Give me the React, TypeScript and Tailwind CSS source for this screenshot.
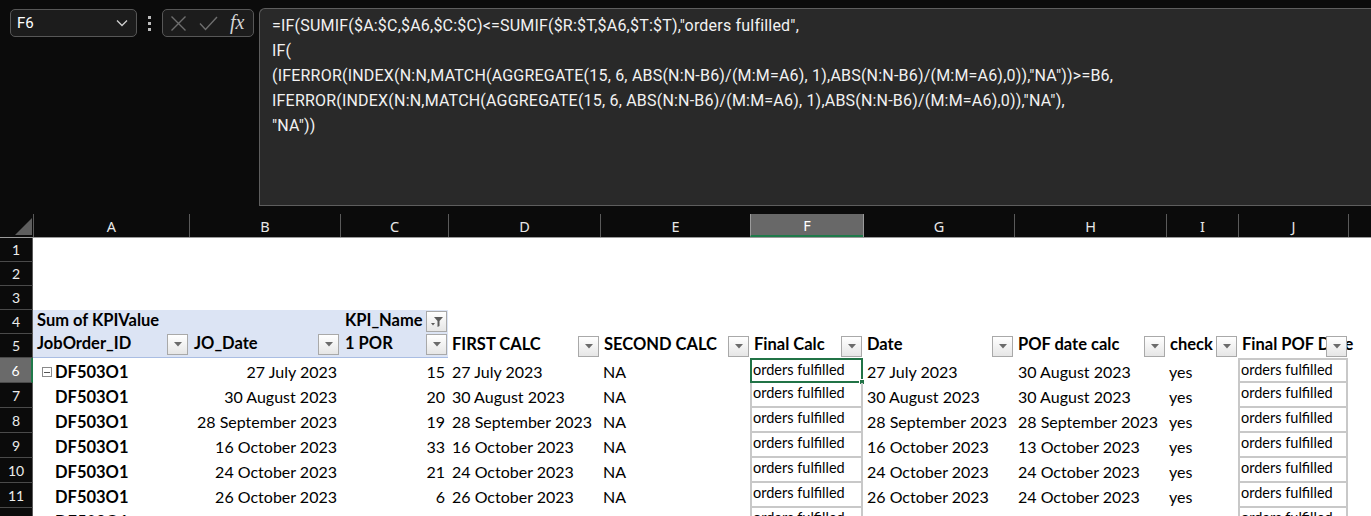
import React from "react";

const COLS = [
  { key: "A", w: "w-[156px]" },
  { key: "B", w: "w-[151px]" },
  { key: "C", w: "w-[108px]" },
  { key: "D", w: "w-[152px]" },
  { key: "E", w: "w-[150px]" },
  { key: "F", w: "w-[113px]" },
  { key: "G", w: "w-[151px]" },
  { key: "H", w: "w-[152px]" },
  { key: "I", w: "w-[72px]" },
  { key: "J", w: "w-[110px]" },
  { key: "K", w: "w-[60px]" },
];

const FORMULA = [
  '=IF(SUMIF($A:$C,$A6,$C:$C)<=SUMIF($R:$T,$A6,$T:$T),"orders fulfilled",',
  "IF(",
  '(IFERROR(INDEX(N:N,MATCH(AGGREGATE(15, 6, ABS(N:N-B6)/(M:M=A6), 1),ABS(N:N-B6)/(M:M=A6),0)),"NA"))>=B6,',
  'IFERROR(INDEX(N:N,MATCH(AGGREGATE(15, 6, ABS(N:N-B6)/(M:M=A6), 1),ABS(N:N-B6)/(M:M=A6),0)),"NA"),',
  '"NA"))',
];

const DATA = [
  { jo: "27 July 2023", por: 15, first: "27 July 2023", date: "27 July 2023", pof: "30 August 2023" },
  { jo: "30 August 2023", por: 20, first: "30 August 2023", date: "30 August 2023", pof: "30 August 2023" },
  { jo: "28 September 2023", por: 19, first: "28 September 2023", date: "28 September 2023", pof: "28 September 2023" },
  { jo: "16 October 2023", por: 33, first: "16 October 2023", date: "16 October 2023", pof: "13 October 2023" },
  { jo: "24 October 2023", por: 21, first: "24 October 2023", date: "24 October 2023", pof: "24 October 2023" },
  { jo: "26 October 2023", por: 6, first: "26 October 2023", date: "26 October 2023", pof: "24 October 2023" },
  { jo: "31 October 2023", por: 12, first: "31 October 2023", date: "31 October 2023", pof: "31 October 2023" },
];

const cellFont = { fontFamily: "Lato, 'Open Sans', sans-serif" };

function DropBtn({ filter }: { filter?: boolean }) {
  return (
    <div className="absolute right-[1px] bottom-[1px] w-[21px] h-[21px] border border-[#a9a9a9] bg-gradient-to-b from-white to-[#e6e6e6] flex items-center justify-center">
      {filter ? (
        <svg width="14" height="12" viewBox="0 0 14 12">
          <path d="M4 1h9L9.5 5v5L7.5 11V5z" fill="#5b5b5b" />
          <path d="M1 7h4L3 9.5z" fill="#5b5b5b" />
        </svg>
      ) : (
        <svg width="8" height="5" viewBox="0 0 8 5">
          <path d="M0 0h8L4 4.5z" fill="#6b6b6b" />
        </svg>
      )}
    </div>
  );
}

function RowHead({ n, h, active }: { n: number; h: string; active?: boolean }) {
  return (
    <div
      className={`w-[33px] shrink-0 ${h} flex items-center justify-center border-b border-[#4a4a4a] text-[14px] ${
        active ? "bg-[#6a6a6a] border-r-2 border-r-[#1f7a4a] text-white" : "bg-[#0b0b0b] border-r border-r-[#5a5a5a] text-[#ececec]"
      }`}
    >
      {n}
    </div>
  );
}

function BoxCell({ w, first, selected }: { w: string; first?: boolean; selected?: boolean }) {
  return (
    <div
      className={`${w} shrink-0 relative border-x-2 border-b-2 border-[#c8c8c8] ${first ? "border-t-2" : ""} pl-[1px] text-[14.5px] leading-[19px] text-black`}
    >
      orders fulfilled
      {selected && (
        <>
          <div className="absolute -left-[2px] -top-[2px] -right-[2px] -bottom-[2px] border-2 border-[#217346]" />
          <div className="absolute -right-[4px] -bottom-[4px] w-[6px] h-[6px] bg-[#217346] border border-white" />
        </>
      )}
    </div>
  );
}

export default function App() {
  return (
    <div className="w-[1371px] h-[516px] overflow-hidden bg-[#0b0b0b]" style={{ fontFamily: "'Noto Sans', sans-serif" }}>
      {/* formula bar */}
      <div className="flex items-start pt-[8px] h-[206px]">
        <div className="ml-[10px] mt-[1px] w-[127px] h-[28px] rounded-[5px] border border-[#575757] bg-[#1c1c1c] flex items-center justify-between pl-[6px] pr-[8px]">
          <span className="text-white text-[15px]" style={{ fontFamily: "Roboto, sans-serif" }}>F6</span>
          <svg width="12" height="8" viewBox="0 0 12 8">
            <path d="M1 1.5l5 5 5-5" stroke="#cfcfcf" strokeWidth="1.3" fill="none" />
          </svg>
        </div>
        <div className="w-[25px] h-[30px] flex flex-col items-center justify-center gap-[3px]">
          <div className="w-[3px] h-[3px] bg-[#bdbdbd]" />
          <div className="w-[3px] h-[3px] bg-[#bdbdbd]" />
          <div className="w-[3px] h-[3px] bg-[#bdbdbd]" />
        </div>
        <div className="mt-[1px] w-[92px] h-[28px] rounded-[5px] border border-[#575757] bg-[#1c1c1c] flex items-center pl-[7px] gap-[12px]">
          <svg width="17" height="17" viewBox="0 0 17 17">
            <path d="M1.5 1.5l14 14M15.5 1.5l-14 14" stroke="#6e6e6e" strokeWidth="1.4" />
          </svg>
          <svg width="19" height="15" viewBox="0 0 19 15">
            <path d="M1 7.5l5.5 6L18 1" stroke="#6e6e6e" strokeWidth="1.4" fill="none" />
          </svg>
          <span className="text-[#d4d4d4] text-[20px] italic leading-none -mt-[3px]" style={{ fontFamily: "'Liberation Serif', serif" }}>
            fx
          </span>
        </div>
        <div className="ml-[5px] flex-1 h-[198px] rounded-tl-[6px] border-t border-l border-b border-[#5e5e5e] bg-[#292929] pl-[12px] pt-[4px]">
          {FORMULA.map((l, i) => (
            <div key={i} className="h-[25px] leading-[25px] text-[16px] text-[#f2f2f2] whitespace-pre tracking-[0.2px]" style={{ fontFamily: "Roboto, sans-serif" }}>
              {l}
            </div>
          ))}
        </div>
      </div>

      {/* column headers */}
      <div className="mt-[7px] flex h-[25px] border-b border-[#9b9b9b]">
        <div className="w-[33px] shrink-0 relative">
          <svg className="absolute left-[15px] top-[5px]" width="17" height="17" viewBox="0 0 17 17">
            <path d="M17 0V17H0z" fill="#5e5e5e" />
          </svg>
        </div>
        {COLS.map((c) => (
          <div
            key={c.key}
            className={`${c.w} shrink-0 flex items-center justify-center text-[14.5px] pt-[2px] border-l ${
              c.key === "F"
                ? "bg-[#686868] border-[#9b9b9b] text-white border-b-2 border-b-[#1f7a4a] mt-[1px]"
                : "border-[#5a5a5a] text-[#e8e8e8] mt-[1px]"
            } ${c.key === "G" ? "border-l-[#9b9b9b]" : ""}`}
          >
            {c.key}
          </div>
        ))}
      </div>

      {/* sheet */}
      <div className="bg-white text-black text-[16px]" style={cellFont}>
        {[1, 2, 3].map((n) => (
          <div key={n} className="flex h-[24px]">
            <RowHead n={n} h="h-[24px]" />
            <div className="flex-1" />
          </div>
        ))}

        {/* row 4 */}
        <div className="flex h-[24px]">
          <RowHead n={4} h="h-[24px]" />
          <div className="w-[415px] shrink-0 bg-[#dce4f4] flex items-end font-bold text-[16.5px] pb-[1px]">
            <div className="w-[307px] pl-[4px]">Sum of KPIValue</div>
            <div className="w-[108px] relative pl-[5px]">
              KPI_Name
              <DropBtn filter />
            </div>
          </div>
        </div>

        {/* row 5 */}
        <div className="flex h-[24px]">
          <RowHead n={5} h="h-[24px]" />
          <div className="w-[415px] shrink-0 bg-[#dce4f4] border-b border-[#a9bde3] flex items-end font-bold text-[16.5px] pb-[1px]">
            <div className="w-[156px] h-full relative pl-[4px] flex items-end">
              JobOrder_ID
              <DropBtn />
            </div>
            <div className="w-[151px] h-full relative pl-[5px] flex items-end">
              JO_Date
              <DropBtn />
            </div>
            <div className="w-[108px] h-full relative pl-[5px] flex items-end">
              1 POR
              <DropBtn />
            </div>
          </div>
          {[
            ["w-[152px]", "FIRST CALC"],
            ["w-[150px]", "SECOND CALC"],
            ["w-[113px]", "Final Calc"],
            ["w-[151px]", "Date"],
            ["w-[152px]", "POF date calc"],
            ["w-[72px]", "check"],
            ["w-[110px]", "Final POF Date"],
          ].map(([w, t]) => (
            <div key={t} className={`${w} shrink-0 h-full relative pl-[4px] font-bold text-[16.5px] flex items-end pb-[1px] whitespace-nowrap`}>
              {t}
              <DropBtn />
            </div>
          ))}
        </div>

        {DATA.map((r, i) => (
          <div key={i} className="flex h-[25px]">
            <RowHead n={i + 6} h="h-[25px]" active={i === 0} />
            <div className="w-[156px] shrink-0 flex items-center pt-[3px] pl-[9px] font-bold text-[16.5px]">
              {i === 0 ? (
                <div className="w-[10px] h-[10px] border border-[#8a8a8a] flex items-center justify-center mr-[3px]">
                  <div className="w-[6px] h-[1px] bg-[#555]" />
                </div>
              ) : (
                <div className="w-[13px]" />
              )}
              DF503O1
            </div>
            <div className="w-[151px] shrink-0 flex items-center justify-end pr-[3px] pt-[2px]">{r.jo}</div>
            <div className="w-[108px] shrink-0 flex items-center justify-end pr-[3px] pt-[2px]">{r.por}</div>
            <div className="w-[152px] shrink-0 flex items-center pl-[4px] pt-[2px] whitespace-nowrap">{r.first}</div>
            <div className="w-[150px] shrink-0 flex items-center pl-[3px] pt-[2px]">NA</div>
            <BoxCell w="w-[113px]" first={i === 0} selected={i === 0} />
            <div className="w-[151px] shrink-0 flex items-center pl-[4px] pt-[2px] whitespace-nowrap">{r.date}</div>
            <div className="w-[152px] shrink-0 flex items-center pl-[4px] pt-[2px] whitespace-nowrap">{r.pof}</div>
            <div className="w-[72px] shrink-0 flex items-center pl-[3px] pt-[2px]">yes</div>
            <BoxCell w="w-[110px]" first={i === 0} />
            <div className="flex-1" />
          </div>
        ))}
      </div>
    </div>
  );
}
